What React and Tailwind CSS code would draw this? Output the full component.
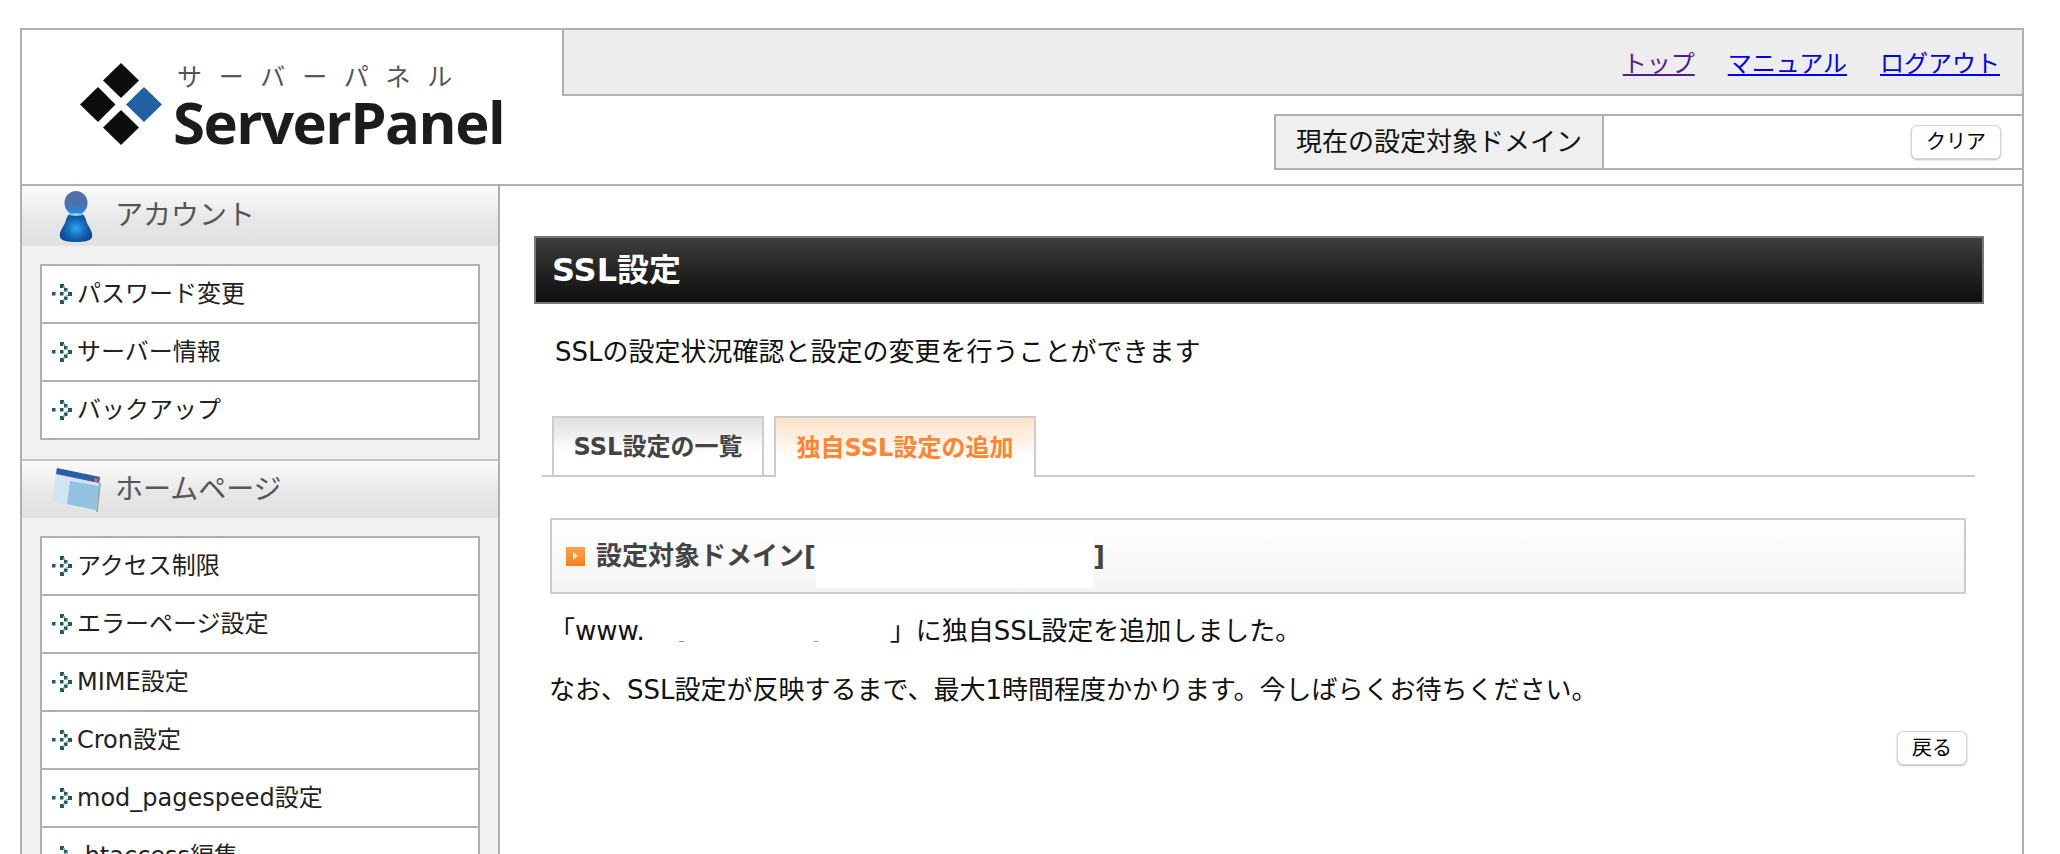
const sans = "font-['DejaVu_Sans','Noto_Sans_CJK_JP',sans-serif]";

const accountMenu = ['パスワード変更', 'サーバー情報', 'バックアップ'];
const homepageMenu = ['アクセス制限', 'エラーページ設定', 'MIME設定', 'Cron設定', 'mod_pagespeed設定', '.htaccess編集'];

const ArrowIcon = () => (
    <svg width="20" height="20" viewBox="0 0 20 20" className="shrink-0">
        <g fill="#1f5a60">
            <rect x="0" y="8" width="3.5" height="3.5" />
            <rect x="8" y="0" width="4" height="4" />
            <rect x="8" y="16" width="4" height="4" />
            <rect x="12" y="4" width="3.5" height="3.5" />
            <rect x="16" y="8" width="4" height="4" />
            <rect x="12" y="12.5" width="3.5" height="3.5" />
            <rect x="8" y="8" width="3.5" height="3.5" />
        </g>
        <g fill="#8fb0b3">
            <rect x="11" y="2" width="2" height="2" />
            <rect x="14" y="6" width="2" height="2" />
            <rect x="14" y="11" width="2" height="2" />
            <rect x="11" y="15" width="2" height="2" />
        </g>
    </svg>
);

const PersonIcon = () => (
    <svg width="36" height="52" viewBox="0 0 36 52" className="shrink-0">
        <defs>
            <radialGradient id="personBody" cx="0.5" cy="0.55" r="0.55">
                <stop offset="0" stopColor="#2ea8f0" />
                <stop offset="0.6" stopColor="#1462b0" />
                <stop offset="1" stopColor="#0e478c" />
            </radialGradient>
            <linearGradient id="personHead" x1="0" y1="0" x2="0" y2="1">
                <stop offset="0" stopColor="#4f6fa8" />
                <stop offset="0.55" stopColor="#4a72b0" />
                <stop offset="1" stopColor="#1f92e8" />
            </linearGradient>
        </defs>
        <path d="M18 22 C10 22 9 27 7 33 C4 39 1 42 2 47 C3 51 10 52 18 52 C26 52 33 51 34 47 C35 42 32 39 29 33 C27 27 26 22 18 22Z" fill="url(#personBody)" />
        <ellipse cx="18" cy="13" rx="11.5" ry="12" fill="url(#personHead)" />
        <ellipse cx="18" cy="24.5" rx="7" ry="1.5" fill="#7fd0ff" />
    </svg>
);

const WindowIcon = () => (
    <svg width="52" height="46" viewBox="0 0 52 46" className="shrink-0">
        <polygon points="7,2 51,11 47,45 1,35" fill="#d3e5f3" stroke="#e6e6e6" strokeWidth="1" />
        <polygon points="20,14 49,19 46,43 17,37" fill="#92c1e2" />
        <polygon points="7,1 50,10 49,16 6,7" fill="#2a5ea6" />
        <circle cx="46" cy="13" r="2" fill="#e0673a" />
        <line x1="50" y1="16" x2="47" y2="45" stroke="#9a9a9a" strokeWidth="1.5" />
    </svg>
);

const SectionHead = ({ icon, title, className }) => (
    <div className={`flex items-center bg-gradient-to-b from-[#fbfbfb] via-[#e6e6e6] via-60% to-[#e2e2e2] ${className}`}>
        <div className="flex w-[93px] justify-center pl-[14px]">{icon}</div>
        <span className="text-[28px] text-[#555]">{title}</span>
    </div>
);

const MenuList = ({ items }) => (
    <ul className="mx-[18px] mt-[18px] border-2 border-[#b0b0b0] bg-white">
        {items.map((item, i) => (
            <li key={item} className={`flex items-center gap-[5px] pl-[10px] text-[24px] text-[#222] ${i > 0 ? 'h-[58px] border-t-2 border-[#b0b0b0]' : 'h-[56px]'}`}>
                <ArrowIcon />
                {item}
            </li>
        ))}
    </ul>
);

const Logo = () => (
    <div className="flex w-[540px] shrink-0 items-start pl-[58px] pt-[33px]">
        <svg width="84" height="84" viewBox="0 0 84 84" className="shrink-0">
            <polygon points="41,0 59,17.5 41,35 23,17.5" fill="#0c0d0d" />
            <polygon points="18,24 35.5,41.5 18,59 0,41.5" fill="#0c0d0d" />
            <polygon points="41,47 59,64.5 41,82 23,64.5" fill="#0c0d0d" />
            <polygon points="64,24 82,41.5 64,59 46,41.5" fill="#2060a5" />
        </svg>
        <div className="ml-[9px] -mt-[5px] flex flex-col">
            <span className="ml-[4px] h-[35px] text-[25px] leading-[34px] tracking-[16.8px] text-[#555] font-['Noto_Sans_CJK_JP',sans-serif] whitespace-nowrap">サーバーパネル</span>
            <span className="text-[58px] leading-[58px] font-bold tracking-[-1.5px] text-[#1c1c1c] font-['Open_Sans',sans-serif]">ServerPanel</span>
        </div>
    </div>
);

const SmallButton = ({ children, className }) => (
    <button className={`rounded-[6px] border border-[#d4d4d4] bg-white text-[20px] leading-none text-black shadow-[0_1px_2px_rgba(0,0,0,0.25)] ${className}`}>
        {children}
    </button>
);

export default function App() {
    return (
        <div className={`h-[854px] overflow-hidden bg-white pl-[20px] pt-[28px] ${sans}`}>
            <div className="w-[2004px] border-2 border-[#b0b0b0]">

                {/* header */}
                <div className="flex h-[156px] border-b-2 border-[#b0b0b0]">
                    <Logo />
                    <div className="flex-1">
                        <div className="flex h-[66px] items-end justify-end gap-[33px] border-b-2 border-l-2 border-[#b0b0b0] bg-[#ededed] pb-[18px] pr-[22px] text-[24px] leading-[28px] font-['Noto_Sans_CJK_JP',sans-serif]">
                            <a href="#top" className="text-[#551a8b] underline">トップ</a>
                            <a href="#manual" className="text-[#0000ee] underline">マニュアル</a>
                            <a href="#logout" className="text-[#0000ee] underline">ログアウト</a>
                        </div>
                        <div className="mt-[18px] ml-[712px] flex h-[56px] border-y-2 border-l-2 border-[#b0b0b0]">
                            <div className="flex w-[328px] items-center justify-center border-r-2 border-[#b0b0b0] bg-[#efefef] text-[26px] text-[#111]">
                                現在の設定対象ドメイン
                            </div>
                            <div className="flex flex-1 items-center justify-end pr-[21px]">
                                <SmallButton className="h-[34px] w-[90px]">クリア</SmallButton>
                            </div>
                        </div>
                    </div>
                </div>

                <div className="flex">
                    {/* sidebar */}
                    <div className="w-[478px] shrink-0 border-r-2 border-[#b0b0b0] bg-[#f1f1f1] pb-[18px]">
                        <SectionHead icon={<PersonIcon />} title="アカウント" className="h-[60px]" />
                        <MenuList items={accountMenu} />
                        <SectionHead icon={<WindowIcon />} title="ホームページ" className="mt-[19px] h-[59px] border-t-2 border-[#c4c4c4]" />
                        <MenuList items={homepageMenu} />
                    </div>

                    {/* main */}
                    <div className="flex-1 pl-[34px] pr-[38px] pt-[50px] text-[26px] text-[#111]">
                        <h1 className="flex h-[68px] items-center border-2 border-[#777] bg-gradient-to-b from-[#3e3e3e] to-[#0e0e0e] pl-[16px] text-[32px] font-bold text-white">
                            SSL設定
                        </h1>
                        <p className="mt-[30px] pl-[21px] leading-[36px]">SSLの設定状況確認と設定の変更を行うことができます</p>

                        <div className="ml-[8px] mr-[9px] mt-[46px] flex gap-[10px] border-b-2 border-[#ccc] pl-[10px] text-[24px] font-bold">
                            <div className="flex h-[59px] w-[212px] items-center justify-center border-2 border-b-0 border-[#ccc] bg-gradient-to-b from-[#e0e0e0] to-white to-60% text-[#444]">
                                SSL設定の一覧
                            </div>
                            <div className="-mb-[2px] flex h-[61px] w-[262px] items-center justify-center border-2 border-b-0 border-[#ccc] bg-gradient-to-b from-[#ffe2c8] to-white to-70% text-[#ff8530]">
                                独自SSL設定の追加
                            </div>
                        </div>

                        <div className="ml-[16px] mr-[18px] mt-[41px] flex h-[76px] items-center border-2 border-[#ccc] bg-gradient-to-b from-white to-[#f4f4f4] pl-[14px] font-bold text-[#444]">
                            <span className="mr-[11px] flex h-[19px] w-[19px] shrink-0 items-center justify-center bg-gradient-to-b from-[#fca14a] to-[#f57f20]">
                                <span className="h-0 w-0 border-y-[4px] border-l-[5px] border-y-transparent border-l-[#ffe9d0]" />
                            </span>
                            設定対象ドメイン[
                            <span className="mt-[18px] h-[50px] w-[277px] shrink-0 self-start bg-white" />
                            ]
                        </div>

                        <p className="ml-[15px] mt-[19px] flex items-center whitespace-nowrap leading-[36px]">
                            「www.
                            <span className="relative h-[36px] w-[245px] shrink-0">
                                <span className="absolute left-[34px] top-[28px] h-[1px] w-[5px] bg-[#999]" />
                                <span className="absolute left-[169px] top-[28px] h-[1px] w-[4px] bg-[#999]" />
                            </span>
                            」に独自SSL設定を追加しました。
                        </p>
                        <p className="ml-[15px] mt-[23px] whitespace-nowrap leading-[36px]">なお、SSL設定が反映するまで、最大1時間程度かかります。今しばらくお待ちください。</p>

                        <div className="ml-[16px] mr-[17px] mt-[23px] flex justify-end">
                            <SmallButton className="h-[34px] w-[70px]">戻る</SmallButton>
                        </div>
                    </div>
                </div>
            </div>
        </div>
    );
}
